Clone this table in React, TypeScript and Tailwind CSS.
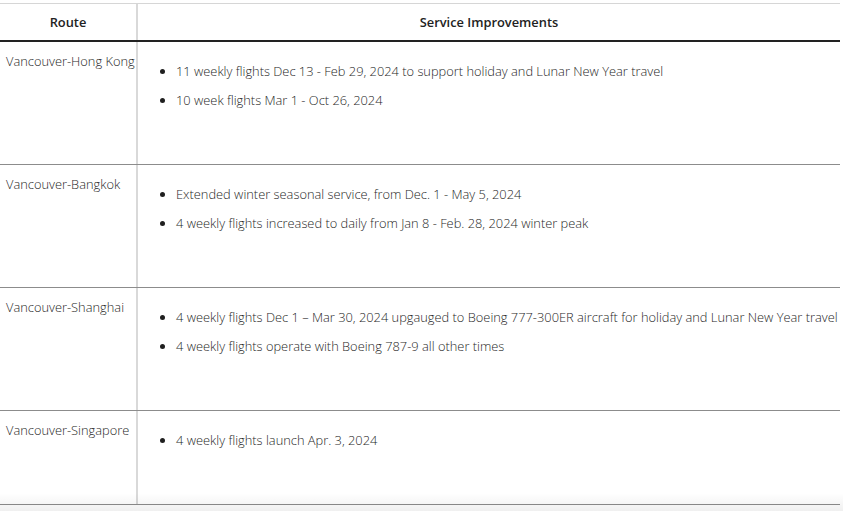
const routes = [
  {
    name: "Vancouver-Hong Kong",
    items: [
      "11 weekly flights Dec 13 - Feb 29, 2024 to support holiday and Lunar New Year travel",
      "10 week flights Mar 1 - Oct 26, 2024",
    ],
  },
  {
    name: "Vancouver-Bangkok",
    items: [
      "Extended winter seasonal service, from Dec. 1 - May 5, 2024",
      "4 weekly flights increased to daily from Jan 8 - Feb. 28, 2024 winter peak",
    ],
  },
  {
    name: "Vancouver-Shanghai",
    items: [
      "4 weekly flights Dec 1 – Mar 30, 2024 upgauged to Boeing 777-300ER aircraft for holiday and Lunar New Year travel",
      "4 weekly flights operate with Boeing 787-9 all other times",
    ],
  },
  {
    name: "Vancouver-Singapore",
    items: ["4 weekly flights launch Apr. 3, 2024"],
  },
];

const App = () => {
  return (
    <div className="relative h-[511px] w-[843px] overflow-hidden bg-white pt-[3px] font-['Open_Sans',sans-serif] text-[12.85px] text-[#1f1f1f]">
      <div className="w-[840px]">
        {/* header */}
        <div className="flex h-[39px] border-t border-b-2 border-t-[#d6d6d6] border-b-[#222]">
          <div className="flex w-[138px] items-center justify-center border-r-2 border-[#d9d9d9] pt-[2px] font-semibold text-[#222]">
            Route
          </div>
          <div className="flex flex-1 items-center justify-center pt-[2px] font-semibold text-[#222]">
            Service Improvements
          </div>
        </div>

        {routes.map((route) => (
          <div key={route.name} className="flex border-b border-[#8c8c8c]">
            <div className="w-[138px] shrink-0 border-r-2 border-[#d9d9d9] px-[6px] pt-[9px] leading-5 font-light whitespace-nowrap">
              {route.name}
            </div>
            <div className="flex-1 pt-[8px] pb-2 font-light">
              <ul className="mt-[11px] mb-[46px] list-disc pl-[38px] leading-5">
                {route.items.map((item) => (
                  <li key={item} className="mb-[9px] whitespace-nowrap">
                    {item}
                  </li>
                ))}
              </ul>
            </div>
          </div>
        ))}
      </div>

      <div className="pointer-events-none absolute bottom-0 left-0 h-[18px] w-full bg-gradient-to-t from-black/[0.06] to-transparent" />
    </div>
  );
};

export default App;
